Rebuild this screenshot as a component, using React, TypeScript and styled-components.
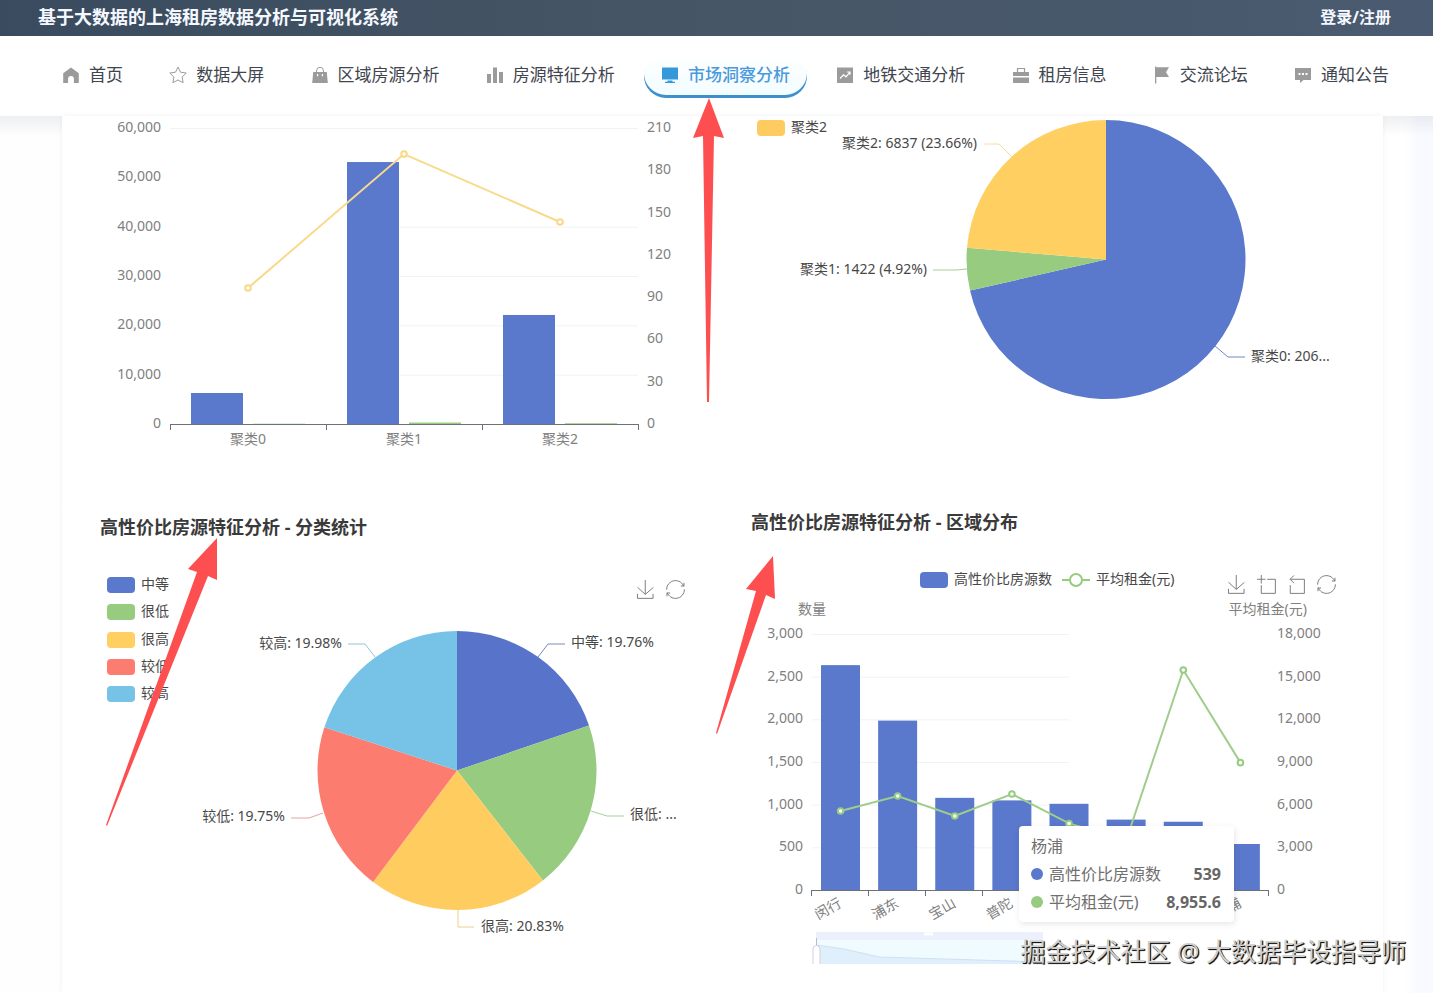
import React from "react";
import styled, { createGlobalStyle, css } from "styled-components";

const palette = {
  blue: "#5a78cc",
  green: "#96cb80",
  yellow: "#ffcf61",
  red: "#fc7c6f",
  sky: "#77c2e7",
};

const GlobalStyle = createGlobalStyle`
  * { box-sizing: border-box; }
  body {
    margin: 0;
    background: #fff;
    color: #333;
    font-family: "Noto Sans", "Noto Sans CJK SC", sans-serif;
  }
`;

const Page = styled.div`
  position: relative;
  display: flex;
  flex-direction: column;
  min-height: 100vh;
  overflow: hidden;
`;

const TopBar = styled.header`
  display: flex;
  align-items: center;
  justify-content: space-between;
  height: 36px;
  padding: 0 42px 2px 38px;
  background: linear-gradient(90deg, #3a4b5f, #465666 50%, #4a5a70);
  color: #f4f8ff;
`;

const SiteTitle = styled.h1`
  margin: 0;
  font-size: 18px;
  line-height: 24px;
  font-weight: 700;
`;

const LoginLink = styled.a`
  color: inherit;
  font-size: 16px;
  line-height: 24px;
  font-weight: 700;
  text-decoration: none;
`;

const NavBar = styled.nav`
  display: flex;
  align-items: center;
  justify-content: space-between;
  height: 80px;
  padding: 0 27px 0 45px;
  background: #fff;
`;

const NavLink = styled.a<{ $active?: boolean }>`
  display: flex;
  align-items: center;
  gap: 9px;
  height: 44px;
  padding: 0 17px 2px;
  border-radius: 22px;
  color: #3f4650;
  font-size: 17px;
  line-height: 24px;
  white-space: nowrap;
  text-decoration: none;

  svg {
    width: 18px;
    height: 18px;
    color: #9b9b9b;
  }

  ${(p) =>
    p.$active &&
    css`
      color: #4a9adb;
      font-weight: 500;
      background: linear-gradient(#fff, #f1fcff);
      box-shadow: inset 0 -3px 0 #3f8fcb;

      svg {
        color: #3498db;
      }
    `}
`;

const Main = styled.main`
  flex: 1;
  display: flex;
  padding: 0 50px 0 62px;
  background:
    linear-gradient(rgba(120, 130, 140, 0.12), rgba(255, 255, 255, 0) 20px),
    linear-gradient(90deg, #fefefe, #fff 50%, #fff 98%, #f8faff 99%);
`;

const Panel = styled.div`
  flex: 1;
  display: flex;
  align-items: flex-start;
  gap: 23px;
  padding: 0 21px;
  background: #fff;
  box-shadow: 0 0 5px rgba(0, 0, 0, 0.06);
`;

const Column = styled.div`
  flex: 1;
  min-width: 0;
`;

const CardTitle = styled.h2`
  margin: 0;
  padding: 34px 17px 0;
  font-size: 18px;
  line-height: 24px;
  font-weight: 700;
  color: #3a3a3a;
`;

const ChartBox = styled.div`
  position: relative;
`;

const Chart = styled.svg`
  display: block;
  width: 100%;
  height: auto;
  font-size: 14px;
`;

const Toolbox = styled.div`
  position: absolute;
  top: 40px;
  right: 25px;
  display: flex;
  gap: 10px;
`;

const ToolButton = styled.button`
  width: 20px;
  height: 20px;
  padding: 0;
  border: 0;
  background: none;

  svg {
    display: block;
    width: 19px;
    height: 19px;
    overflow: visible;
    fill: none;
    stroke: #777;
    stroke-width: 3;
  }
`;

const Tooltip = styled.div`
  position: absolute;
  left: 285px;
  top: 292px;
  width: 215px;
  padding: 6px 13px 6px 12px;
  border-radius: 4px;
  background: #fff;
  box-shadow: 1px 2px 6px rgba(0, 0, 0, 0.1);
  color: #707070;
  font-size: 16px;
  line-height: 28px;
`;

const TooltipRow = styled.div`
  display: flex;
  align-items: center;
  gap: 6px;
  white-space: nowrap;

  strong {
    margin-left: auto;
    color: #666;
  }
`;

const Dot = styled.span<{ $color: string }>`
  width: 12px;
  height: 12px;
  border-radius: 50%;
  background: ${(p) => p.$color};
`;

const Arrows = styled.svg`
  position: absolute;
  inset: 0;
  width: 100%;
  height: 100%;
  pointer-events: none;
  fill: #fd4f50;
`;

const Watermark = styled.div`
  position: absolute;
  right: 27px;
  bottom: 25px;
  color: #d0d0d0;
  font-size: 25px;
  line-height: 34px;
  white-space: nowrap;
  text-shadow: 1px 1px 1px #111, 1px 1px 0 #333;
`;

const navIcons: Record<string, React.ReactNode> = {
  home: <path d="M9 1.5 1.2 7.3V17h4.900v-4a2.900 2.900 0 0 1 5.800 0V17h4.900V7.300z" />,
  star: (
    <path
      fill="none"
      stroke="currentColor"
      strokeLinejoin="round"
      d="m9 1 2.5 5.2 5.7.8-4.1 4 1 5.7L9 14l-5.1 2.7 1-5.7-4.1-4 5.7-.8z"
    />
  ),
  bag: (
    <>
      <path
        fillRule="evenodd"
        d="M2.2 6h13.6l1 11H1.200zM6 8v2.200h1.200V8zm4.800 0v2.200H12V8z"
      />
      <path d="M5.500 6V4.800a3.500 3.500 0 0 1 7 0V6" fill="none" stroke="currentColor" />
    </>
  ),
  bars: <path d="M1 8h4v9H1zm6-6.500h4V17H7zm6 4.500h4v11h-4z" />,
  monitor: <path d="M1 1.500h16v12H1zM6.500 14.500h5v1.200H14V17H4v-1.300h2.500z" />,
  trend: (
    <>
      <path d="M1 1.500h16V17H1z" />
      <path d="m4 12.500 3.500-3.700 2.500 2 4-4.600M11.200 6H14v2.800" fill="none" stroke="#fff" strokeWidth="1.200" />
    </>
  ),
  briefcase: (
    <>
      <path d="M1 6h16v4H1zm0 5.500h16V17H1z" />
      <path d="M5.500 6V2.500h7V6" fill="none" stroke="currentColor" strokeWidth="1.200" />
    </>
  ),
  flag: <path d="M2 .5h1.300v.8H16l-3 4.900 3 4.900H3.300v6.400H2z" />,
  chat: (
    <path
      fillRule="evenodd"
      d="M1 2h16v12H9.500L6 17v-3H1zm3.500 5v2h2V7zM8 7v2h2V7zm3.500 0v2h2V7z"
    />
  ),
};

const navItems = [
  { icon: "home", label: "首页" },
  { icon: "star", label: "数据大屏" },
  { icon: "bag", label: "区域房源分析" },
  { icon: "bars", label: "房源特征分析" },
  { icon: "monitor", label: "市场洞察分析", active: true },
  { icon: "trend", label: "地铁交通分析" },
  { icon: "briefcase", label: "租房信息" },
  { icon: "flag", label: "交流论坛" },
  { icon: "chat", label: "通知公告" },
];

const toolPaths = {
  save: {
    label: "保存为图片",
    d: "M4.7,22.9L29.3,45.5L54.7,23.4M4.6,43.6L4.6,58L53.8,58L53.8,43.6M29.2,45.1L29.2,0",
  },
  zoom: { label: "区域缩放", d: "M0,13.5h26.9 M13.5,26.9V0 M32.1,13.5H58V58H13.5 V32.1" },
  back: {
    label: "区域缩放还原",
    d: "M22,1.4L9.9,13.5l12.3,12.3 M10.3,13.5H54.9v44.6 H10.3v-26",
  },
  restore: {
    label: "还原",
    d: "M47,18.9h9.8V8.7 M56.3,20.1 C52.1,9,40.5,0.6,26.8,2.1C12.6,3.7,1.6,16.2,2.1,30.6 M13,41.1H3.1v10.2 M3.7,39.9c4.2,11.1,15.8,19.5,29.5,18 c14.2-1.6,25.2-14.1,24.7-28.5",
  },
};

function Tools({ names }: { names: (keyof typeof toolPaths)[] }) {
  return (
    <Toolbox>
      {names.map((n) => (
        <ToolButton key={n} type="button" aria-label={toolPaths[n].label}>
          <svg viewBox="0 0 60 60">
            <path d={toolPaths[n].d} />
          </svg>
        </ToolButton>
      ))}
    </Toolbox>
  );
}

type Slice = { value: number; color: string };

function Pie({ cx, cy, r, slices }: { cx: number; cy: number; r: number; slices: Slice[] }) {
  const total = slices.reduce((s, x) => s + x.value, 0);
  let at = 0;
  const point = (t: number) => {
    const a = (t / total) * Math.PI * 2;
    return `${cx + r * Math.sin(a)} ${cy - r * Math.cos(a)}`;
  };
  return (
    <>
      {slices.map((s) => {
        const from = at;
        at += s.value;
        const large = s.value / total > 0.5 ? 1 : 0;
        return (
          <path
            key={s.color}
            fill={s.color}
            d={`M${cx} ${cy}L${point(from)}A${r} ${r} 0 ${large} 1 ${point(at)}Z`}
          />
        );
      })}
    </>
  );
}

type Callout = { text: string; x: number; y: number; end?: boolean; line: string; color: string };

function Callouts({ items }: { items: Callout[] }) {
  return (
    <>
      {items.map((c) => (
        <g key={c.text}>
          <polyline points={c.line} fill="none" stroke={c.color} />
          <text x={c.x} y={c.y} textAnchor={c.end ? "end" : "start"} fill="#484848">
            {c.text}
          </text>
        </g>
      ))}
    </>
  );
}

function Swatch({ x, y, color, text }: { x: number; y: number; color: string; text: string }) {
  return (
    <g>
      <rect x={x} y={y} width="28" height="16" rx="4" fill={color} />
      <text x={x + 34} y={y + 12} fill="#484848">
        {text}
      </text>
    </g>
  );
}

function ClusterBars() {
  const left = 87;
  const right = 555;
  const base = 308;
  const height = 296;
  const band = (right - left) / 3;
  const counts = [6280, 53100, 22100];
  const small = [60, 300, 150];
  const rents = [96.5, 191.5, 143.3];
  const y = (v: number, max: number) => base - (v / max) * height;
  const grid = [
    [60000, left],
    [40000, 317],
    [30000, 317],
    [20000, 317],
    [10000, 317],
  ];
  const pts = rents.map((v, i) => [left + band * (i + 0.5), y(v, 210)]);
  return (
    <Chart viewBox="0 0 628 365" role="img" aria-label="聚类统计">
      {grid.map(([v, x]) => (
        <line key={v} x1={x} x2={right} y1={y(v, 60000) + 0.5} y2={y(v, 60000) + 0.5} stroke="#f1f2f3" />
      ))}
      {[0, 1, 2, 3, 4, 5, 6].map((n) => (
        <text key={n} x="78" y={y(n * 10000, 60000) + 4} textAnchor="end" fill="#808080">
          {(n * 10000).toLocaleString("en-US")}
        </text>
      ))}
      {[0, 30, 60, 90, 120, 150, 180, 210].map((n) => (
        <text key={n} x="564" y={y(n, 210) + 4} fill="#808080">
          {n}
        </text>
      ))}
      {counts.map((v, i) => (
        <g key={v}>
          <rect x={left + band * i + 21} y={y(v, 60000)} width="52" height={base - y(v, 60000)} fill={palette.blue} />
          <rect
            x={left + band * i + 83}
            y={y(small[i], 60000)}
            width="52"
            height={base - y(small[i], 60000)}
            fill={palette.green}
          />
          <text x={left + band * (i + 0.5)} y="328" textAnchor="middle" fill="#808080">
            聚类{i}
          </text>
        </g>
      ))}
      <path
        d={`M${left} ${base + 0.5}H${right}` + [0, 1, 2, 3].map((i) => `M${left + band * i + 0.5} ${base}v6`).join("")}
        stroke="#6e7079"
      />
      <polyline points={pts.map((p) => p.join(",")).join(" ")} fill="none" stroke="#f8da8b" strokeWidth="2" />
      {pts.map(([px, py]) => (
        <circle key={px} cx={px} cy={py} r="2.800" fill="#fff" stroke="#f8d987" strokeWidth="2" />
      ))}
    </Chart>
  );
}

function ClusterPie() {
  return (
    <Chart viewBox="0 0 628 360" role="img" aria-label="聚类占比">
      <Swatch x={23} y={4} color="#fdcb60" text="聚类2" />
      <Pie
        cx={372}
        cy={143.5}
        r={139.5}
        slices={[
          { value: 71.42, color: palette.blue },
          { value: 4.92, color: palette.green },
          { value: 23.66, color: palette.yellow },
        ]}
      />
      <Callouts
        items={[
          { text: "聚类2: 6837 (23.66%)", x: 243, y: 32, end: true, line: "250,28 265,28 278,41", color: "#f5de9d" },
          { text: "聚类1: 1422 (4.92%)", x: 193, y: 158, end: true, line: "199,154 223,154 233,153", color: "#a5cf97" },
          { text: "聚类0: 206...", x: 517, y: 245, line: "481,230 494,241 511,241", color: "#7386c4" },
        ]}
      />
    </Chart>
  );
}

function CategoryPie() {
  const legend = [
    ["中等", palette.blue],
    ["很低", palette.green],
    ["很高", palette.yellow],
    ["较低", palette.red],
    ["较高", palette.sky],
  ];
  return (
    <Chart viewBox="0 0 628 431" role="img" aria-label="分类统计">
      {legend.map(([text, color], i) => (
        <Swatch key={text} x={24} y={38 + Math.round(i * 27.3)} color={color} text={text} />
      ))}
      <Pie
        cx={374}
        cy={231.5}
        r={139.5}
        slices={[
          { value: 19.76, color: "#5773ca" },
          { value: 19.68, color: palette.green },
          { value: 20.83, color: "#ffcc5f" },
          { value: 19.75, color: palette.red },
          { value: 19.98, color: palette.sky },
        ]}
      />
      <Callouts
        items={[
          { text: "中等: 19.76%", x: 488, y: 108, line: "455,118 465,105 482,105", color: "#7d8ab8" },
          { text: "很低: ...", x: 547, y: 280, line: "508,272 524,277 541,277", color: "#a9cf9d" },
          { text: "很高: 20.83%", x: 398, y: 392, line: "375,371 375,388 391,388", color: "#ecd08a" },
          { text: "较低: 19.75%", x: 202, y: 282, end: true, line: "208,279 226,279 240,274", color: "#e2a5a1" },
          { text: "较高: 19.98%", x: 259, y: 109, end: true, line: "265,105 282,105 292,118", color: "#93c3d6" },
        ]}
      />
    </Chart>
  );
}

function DistrictChart() {
  const left = 78;
  const right = 535;
  const base = 356;
  const height = 256;
  const band = (right - left) / 8;
  const counts = [2635, 1985, 1080, 1050, 1010, 825, 800, 539];
  const rents = [5555, 6610, 5200, 6750, 4680, 3500, 15470, 8955.6];
  const names = ["闵行", "浦东", "宝山", "普陀", "", "", "", "杨浦"];
  const y = (v: number, max: number) => base - (v / max) * height;
  const pts = rents.map((v, i) => [left + band * (i + 0.5), y(v, 18000)]);
  return (
    <Chart viewBox="0 0 628 436" role="img" aria-label="区域分布">
      <Swatch x={186} y={38} color={palette.blue} text="高性价比房源数" />
      <path d="M328 46h28" stroke={palette.green} strokeWidth="2" />
      <circle cx="342" cy="46" r="6" fill="#fff" stroke={palette.green} strokeWidth="2" />
      <text x="362" y="50" fill="#484848">
        平均租金(元)
      </text>
      <text x="64" y="80" fill="#808080">
        数量
      </text>
      <text x="573" y="80" textAnchor="end" fill="#808080">
        平均租金(元)
      </text>
      {[0, 1, 2, 3, 4, 5, 6].map((n) => (
        <g key={n} fill="#808080">
          {n > 0 && (
            <line x1={left} x2="335" y1={y(n, 6) + 0.5} y2={y(n, 6) + 0.5} stroke="#f1f2f3" />
          )}
          <text x="69" y={y(n, 6) + 4} textAnchor="end">
            {(n * 500).toLocaleString("en-US")}
          </text>
          <text x="543" y={y(n, 6) + 4}>
            {(n * 3000).toLocaleString("en-US")}
          </text>
        </g>
      ))}
      {counts.map((v, i) => (
        <g key={v}>
          <rect x={left + band * i + 9} y={y(v, 3000)} width="39" height={base - y(v, 3000)} fill={palette.blue} />
          <text
            transform={`translate(${left + band * (i + 0.5) + 2} ${base + 16}) rotate(-30)`}
            textAnchor="end"
            fill="#808080"
          >
            {names[i]}
          </text>
        </g>
      ))}
      <path
        d={
          `M${left} ${base + 0.5}H${right}` +
          names.map((_, i) => `M${Math.round(left + band * i) - 0.5} ${base}v6`).join("") +
          `M${right - 0.5} ${base}v6`
        }
        stroke="#6e7079"
      />
      <polyline points={pts.map((p) => p.join(",")).join(" ")} fill="none" stroke="#9fcd8c" strokeWidth="2" />
      {pts.map(([px, py]) => (
        <circle key={px} cx={px} cy={py} r="2.800" fill="#fff" stroke={palette.green} strokeWidth="2" />
      ))}
      <g>
        <rect x="82" y="398" width="227" height="8" fill="#ecf0fc" />
        <rect x="82" y="406" width="227" height="24" fill="#f0fbff" />
        <path d="M82 411 110 415 145 423 309 428V430H82z" fill="#e0effc" />
        <path d="M82 411 110 415 145 423 309 428" fill="none" stroke="#cfe0f2" />
        <path d="M190 400h9" stroke="#fff" strokeWidth="3" />
        <path d="M82.500 404v8" stroke="#b5bccb" />
        <path d="M79 430v-15a3 3 0 0 1 7 0v15" fill="#fff" stroke="#ccd3e0" />
      </g>
    </Chart>
  );
}

export default function App() {
  return (
    <Page>
      <GlobalStyle />
      <TopBar>
        <SiteTitle>基于大数据的上海租房数据分析与可视化系统</SiteTitle>
        <LoginLink href="#login">登录/注册</LoginLink>
      </TopBar>
      <NavBar>
        {navItems.map((item) => (
          <NavLink key={item.icon} href={`#${item.icon}`} $active={item.active}>
            <svg viewBox="0 0 18 18" fill="currentColor" aria-hidden="true">
              {navIcons[item.icon]}
            </svg>
            {item.label}
          </NavLink>
        ))}
      </NavBar>
      <Main>
        <Panel>
          <Column>
            <ClusterBars />
            <CardTitle>高性价比房源特征分析 - 分类统计</CardTitle>
            <ChartBox>
              <CategoryPie />
              <Tools names={["save", "restore"]} />
            </ChartBox>
          </Column>
          <Column>
            <ClusterPie />
            <CardTitle>高性价比房源特征分析 - 区域分布</CardTitle>
            <ChartBox>
              <DistrictChart />
              <Tools names={["save", "zoom", "back", "restore"]} />
              <Tooltip role="tooltip">
                <div>杨浦</div>
                <TooltipRow>
                  <Dot $color={palette.blue} />
                  高性价比房源数
                  <strong>539</strong>
                </TooltipRow>
                <TooltipRow>
                  <Dot $color={palette.green} />
                  平均租金(元)
                  <strong>8,955.6</strong>
                </TooltipRow>
              </Tooltip>
            </ChartBox>
          </Column>
        </Panel>
      </Main>
      <Arrows aria-hidden="true">
        <path d="M709 98 724 138 714 136 709 402H707L703 136 693 138z" />
        <path d="M217 538V580L208 576 107 826 106 825 197 572 188 569z" />
        <path d="M773 556 775 599 766 595 717 734 716 733 756 591 746 589z" />
      </Arrows>
      <Watermark>掘金技术社区 @ 大数据毕设指导师</Watermark>
    </Page>
  );
}
